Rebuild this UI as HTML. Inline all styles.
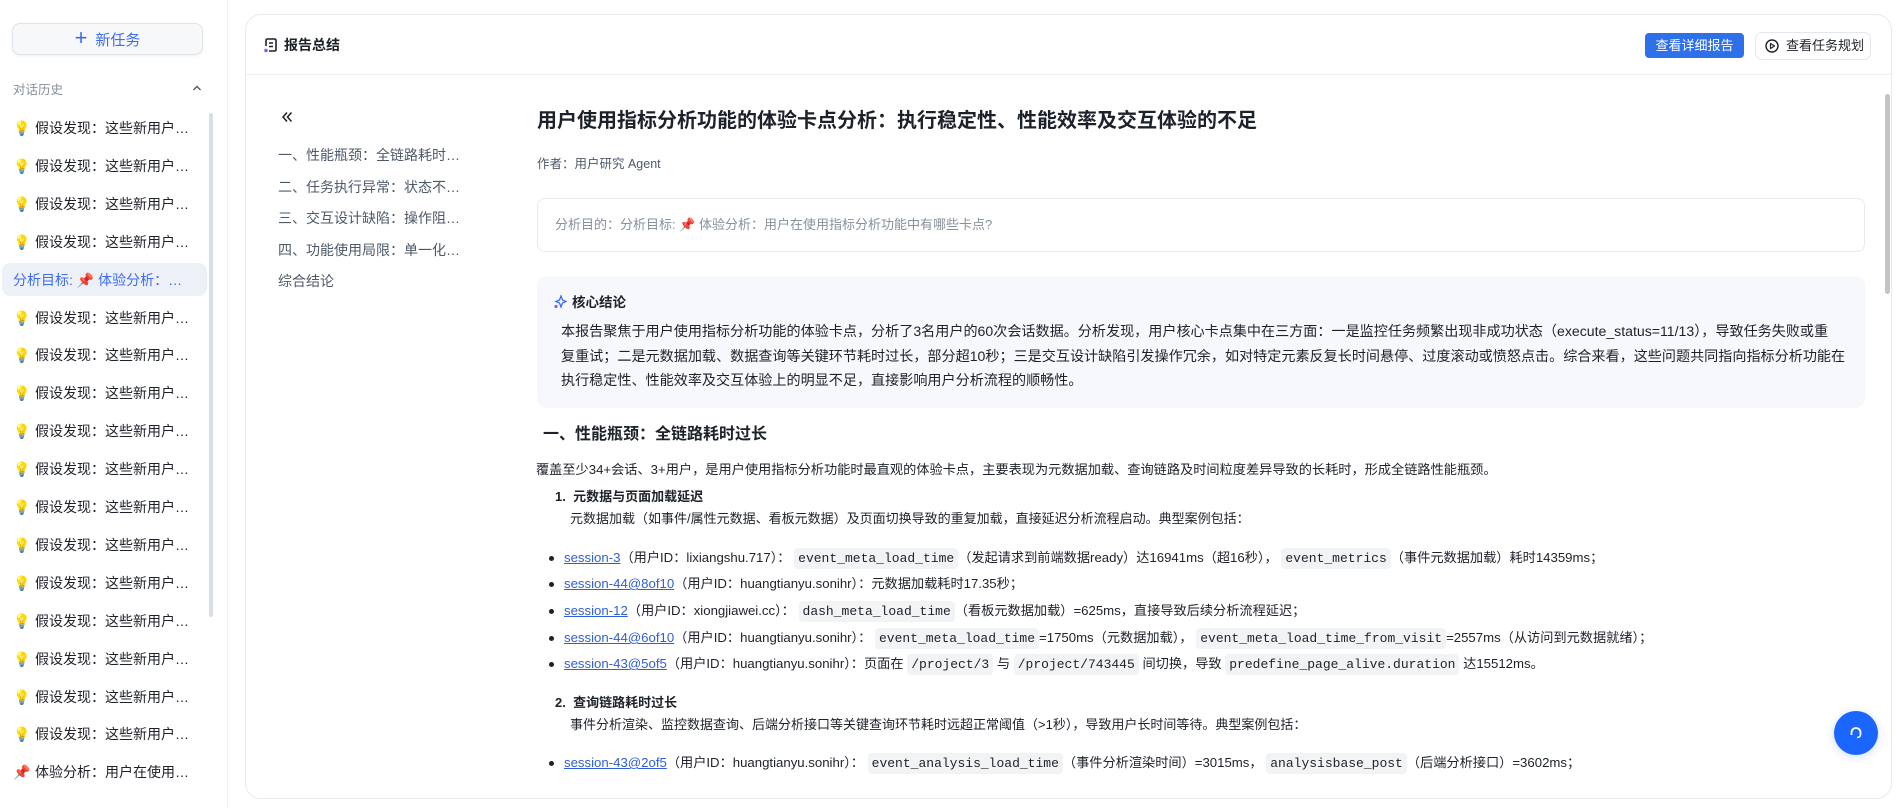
<!DOCTYPE html>
<html><head><meta charset="utf-8">
<style>
*{box-sizing:border-box;margin:0;padding:0}
body{width:1903px;height:808px;overflow:hidden;background:#fff;font-family:"Liberation Sans","Noto Sans CJK SC",sans-serif;color:#1d2129;position:relative}
.abs{position:absolute;white-space:nowrap}
.side{position:absolute;left:0;top:0;width:228px;height:808px;border-right:1px solid #eef0f3;background:#fff}
.newbtn{position:absolute;left:12px;top:23px;width:191px;height:32px;border:1px solid #dfe3ea;border-radius:8px;background:#f7f8fa;box-shadow:0 1px 2px rgba(0,0,0,.06);color:#3d6cf0;font-size:15px;display:flex;align-items:center;justify-content:center;gap:8px}
.hist{position:absolute;left:13px;top:79px;font-size:12.5px;color:#86909c}
.item{position:absolute;left:13px;font-size:14px;color:#1d2129;height:34px;line-height:34px;display:flex;align-items:center;gap:6px}
.item .ic{font-size:14px;width:16px}
.active{position:absolute;left:2px;top:263px;width:205px;height:33px;background:#eef0f7;border-radius:8px}
.panel{position:absolute;left:245px;top:14px;width:1647px;height:785px;border:1px solid #e8eaf0;border-radius:16px;background:#fff;overflow:hidden}
code{font-family:"Liberation Mono",monospace;font-size:13px;background:#f2f3f5;border-radius:4px;padding:3px 4px}
a{color:#2f5fd6;text-decoration:underline}
.b{font-size:13.2px;color:#1d2129}
.dot{position:absolute;width:5px;height:5px;border-radius:50%;background:#1d2129}
</style></head><body>
<div class="side">
  <div class="newbtn"><span style="font-size:22px;line-height:1;font-weight:300;margin-top:-2px">+</span><span>新任务</span></div>
  <div class="hist">对话历史</div>
  <svg class="abs" style="left:192px;top:84px" width="10" height="8" viewBox="0 0 10 8"><path d="M1.5 6 L5 2.5 L8.5 6" fill="none" stroke="#4e5969" stroke-width="1.4"/></svg>
  <div style="position:absolute;left:209px;top:113px;width:4px;height:504px;border-radius:2px;background:#d9dde6"></div>
  <div class="active"></div>
</div>
<div id="items"></div>

<div class="panel">
  <svg class="abs" style="left:17px;top:22px" width="16" height="17" viewBox="0 0 16 17"><path d="M3 9 V3.5 Q3 2 4.5 2 H11.5 Q13 2 13 3.5 V12.5 Q13 14 11.5 14 H6" fill="none" stroke="#1d2129" stroke-width="1.6"/><path d="M6 6 H10 M6 9.5 H10" stroke="#1d2129" stroke-width="1.6"/><circle cx="3" cy="13.5" r="1.8" fill="#7b5cff"/></svg>
  <div class="abs" style="left:38px;top:20px;font-size:14px;font-weight:bold;line-height:20px">报告总结</div>
  <div class="abs" style="left:1399px;top:18px;width:99px;height:25px;background:#2e6fea;border-radius:4px;color:#fff;font-size:13px;line-height:25px;text-align:center">查看详细报告</div>
  <div class="abs" style="left:1509px;top:17px;width:116px;height:28px;border:1px solid #e5e6eb;border-radius:7px;font-size:13px;line-height:26px;padding-left:30px;color:#1d2129">查看任务规划</div>
  <svg class="abs" style="left:1519px;top:24px" width="14" height="14" viewBox="0 0 14 14"><circle cx="7" cy="7" r="6" fill="none" stroke="#1d2129" stroke-width="1.4"/><path d="M5.5 4.5 L9.5 7 L5.5 9.5 Z" fill="none" stroke="#1d2129" stroke-width="1.2" stroke-linejoin="round"/></svg>
  <div style="position:absolute;left:0;top:59px;width:100%;height:1px;background:#eceef2"></div>
  <div style="position:absolute;left:1639px;top:79px;width:5px;height:200px;border-radius:3px;background:#c4c4c4"></div>

  <svg class="abs" style="left:34px;top:95px" width="14" height="14" viewBox="0 0 14 14"><path d="M7 2.5 L3 7 L7 11.5 M11.5 2.5 L7.5 7 L11.5 11.5" fill="none" stroke="#1d2129" stroke-width="1.5"/></svg>
  <div class="abs" style="left:32px;top:125px;font-size:14px;color:#4e5969;line-height:31.5px">一、性能瓶颈：全链路耗时…<br>二、任务执行异常：状态不…<br>三、交互设计缺陷：操作阻…<br>四、功能使用局限：单一化…<br>综合结论</div>

  <div class="abs" style="left:291px;top:91px;font-size:20px;font-weight:600;line-height:30px">用户使用指标分析功能的体验卡点分析：执行稳定性、性能效率及交互体验的不足</div>
  <div class="abs" style="left:291px;top:141px;font-size:12.5px;color:#4e5969;line-height:16px">作者：用户研究 Agent</div>
  <div style="position:absolute;left:291px;top:183px;width:1328px;height:54px;border:1px solid #e8eaf0;border-radius:8px"></div>
  <div class="abs" style="left:309px;top:201px;font-size:13px;color:#86909c;line-height:18px">分析目的：分析目标: 📌 体验分析：用户在使用指标分析功能中有哪些卡点?</div>

  <div style="position:absolute;left:291px;top:261px;width:1328px;height:132px;background:#f7f8fc;border-radius:10px"></div>
  <svg class="abs" style="left:307px;top:280px" width="14" height="14" viewBox="0 0 14 14"><path d="M8 1 L9.5 5 L13 6.5 L9.5 8 L8 12 L6.5 8 L3 6.5 L6.5 5 Z" fill="none" stroke="#3d6cf0" stroke-width="1.3"/><circle cx="3" cy="11.5" r="1.6" fill="#7b5cff"/></svg>
  <div class="abs" style="left:326px;top:278px;font-size:13.5px;font-weight:600;line-height:20px">核心结论</div>
  <div class="abs" style="left:315px;top:304px;font-size:14.1px;line-height:24.5px;color:#1d2129">本报告聚焦于用户使用指标分析功能的体验卡点，分析了3名用户的60次会话数据。分析发现，用户核心卡点集中在三方面：一是监控任务频繁出现非成功状态（execute_status=11/13），导致任务失败或重<br>复重试；二是元数据加载、数据查询等关键环节耗时过长，部分超10秒；三是交互设计缺陷引发操作冗余，如对特定元素反复长时间悬停、过度滚动或愤怒点击。综合来看，这些问题共同指向指标分析功能在<br>执行稳定性、性能效率及交互体验上的明显不足，直接影响用户分析流程的顺畅性。</div>

  <div class="abs" style="left:297px;top:408px;font-size:16px;font-weight:600;line-height:24px">一、性能瓶颈：全链路耗时过长</div>
  <div class="abs" style="left:290px;top:445px;font-size:13.2px;line-height:20px">覆盖至少34+会话、3+用户，是用户使用指标分析功能时最直观的体验卡点，主要表现为元数据加载、查询链路及时间粒度差异导致的长耗时，形成全链路性能瓶颈。</div>
  <div class="abs" style="left:309px;top:472px;font-size:13px;line-height:20px;font-weight:600">1.&nbsp; 元数据与页面加载延迟</div>
  <div class="abs" style="left:324px;top:494px;font-size:13px;line-height:20px">元数据加载（如事件/属性元数据、看板元数据）及页面切换导致的重复加载，直接延迟分析流程启动。典型案例包括：</div>

  <div class="dot" style="left:303px;top:541px"></div>
  <div class="abs b" style="left:318px;top:533px;line-height:20px"><a>session-3</a>（用户ID：lixiangshu.717）： <code>event_meta_load_time</code>（发起请求到前端数据ready）达16941ms（超16秒）， <code>event_metrics</code>（事件元数据加载）耗时14359ms；</div>
  <div class="dot" style="left:303px;top:567px"></div>
  <div class="abs b" style="left:318px;top:559px;line-height:20px"><a>session-44@8of10</a>（用户ID：huangtianyu.sonihr）：元数据加载耗时17.35秒；</div>
  <div class="dot" style="left:303px;top:594px"></div>
  <div class="abs b" style="left:318px;top:586px;line-height:20px"><a>session-12</a>（用户ID：xiongjiawei.cc）： <code>dash_meta_load_time</code>（看板元数据加载）=625ms，直接导致后续分析流程延迟；</div>
  <div class="dot" style="left:303px;top:621px"></div>
  <div class="abs b" style="left:318px;top:613px;line-height:20px"><a>session-44@6of10</a>（用户ID：huangtianyu.sonihr）： <code>event_meta_load_time</code>=1750ms（元数据加载）， <code>event_meta_load_time_from_visit</code>=2557ms（从访问到元数据就绪）；</div>
  <div class="dot" style="left:303px;top:647px"></div>
  <div class="abs b" style="left:318px;top:639px;line-height:20px"><a>session-43@5of5</a>（用户ID：huangtianyu.sonihr）：页面在 <code>/project/3</code> 与 <code>/project/743445</code> 间切换，导致 <code>predefine_page_alive.duration</code> 达15512ms。</div>

  <div class="abs" style="left:309px;top:678px;font-size:13px;line-height:20px;font-weight:600">2.&nbsp; 查询链路耗时过长</div>
  <div class="abs" style="left:324px;top:700px;font-size:13px;line-height:20px">事件分析渲染、监控数据查询、后端分析接口等关键查询环节耗时远超正常阈值（&gt;1秒），导致用户长时间等待。典型案例包括：</div>
  <div class="dot" style="left:303px;top:746px"></div>
  <div class="abs b" style="left:318px;top:738px;line-height:20px"><a>session-43@2of5</a>（用户ID：huangtianyu.sonihr）： <code>event_analysis_load_time</code>（事件分析渲染时间）=3015ms， <code>analysisbase_post</code>（后端分析接口）=3602ms；</div>
</div>

<div style="position:absolute;left:1834px;top:711px;width:44px;height:44px;border-radius:50%;background:#1a66ff;box-shadow:0 2px 10px rgba(26,102,255,.2)"></div>
<svg class="abs" style="left:1848px;top:725px" width="16" height="16" viewBox="0 0 16 16"><path d="M3.5 10 V7.5 A4.5 4.5 0 0 1 12.5 7.5 V10" fill="none" stroke="#fff" stroke-width="1.8"/><path d="M12.5 10 Q12 12.5 9 12.5" fill="none" stroke="#fff" stroke-width="1.5"/></svg>

<script>
var h='';
for(var i=0;i<18;i++){var t=111+i*37.9;
 if(i==4){h+='<div class="item" style="top:'+t+'px;left:13px;color:#3d6cf0">分析目标: 📌 体验分析：…</div>';}
 else if(i==17){h+='<div class="item" style="top:'+t+'px"><span class="ic">📌</span>体验分析：用户在使用…</div>';}
 else{h+='<div class="item" style="top:'+t+'px"><span class="ic">💡</span>假设发现：这些新用户…</div>';}
}
document.getElementById('items').innerHTML=h;
</script>
</body></html>
